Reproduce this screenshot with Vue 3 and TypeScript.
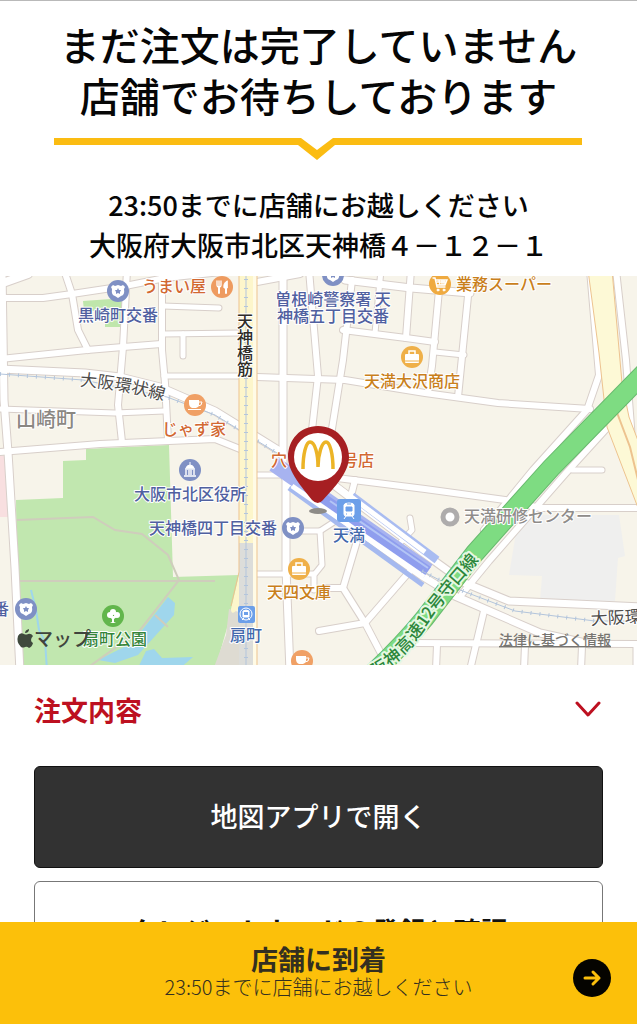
<script setup lang="ts">
import { ref } from 'vue'

interface Road { d: string; w: number }
interface Label { t: string; x: number; y: number; c: string }
interface Poi { kind: string; x: number; y: number; c: string }

const open = ref(false)

const roads: Road[] = [
  { d: 'M0 284L28 274', w: 8 },
  { d: 'M0 298L43 298L72 294L125 286L165 278L240 270', w: 6 },
  { d: 'M64 270L72 294L78 330L88 350', w: 6 },
  { d: 'M127 270L123 347L118 405L122 442', w: 6 },
  { d: 'M162 270V350L165 383L168 440', w: 6 },
  { d: 'M0 359L87 350L123 347L161 344', w: 6 },
  { d: 'M0 369L85 373L120 377L160 387L215 411L283 453', w: 7 },
  { d: 'M2 270L4 400L8 452L15 568L20 672', w: 7 },
  { d: 'M0 409L115 413L164 411', w: 5 },
  { d: 'M0 452L100 444L215 439L240 449', w: 6 },
  { d: 'M163 306L219 308', w: 5 },
  { d: 'M162 334L240 333', w: 5 },
  { d: 'M183 334V356', w: 5 },
  { d: 'M164 376H240', w: 5 },
  { d: 'M283 270V470L286 480V568L290 672', w: 7 },
  { d: 'M309 270L318 376L312 430', w: 6 },
  { d: 'M352 280L343 360L331 435', w: 6 },
  { d: 'M257 377L345 380L425 393L498 403L590 409', w: 6 },
  { d: 'M257 282L300 274', w: 6 },
  { d: 'M345 280L411 288L470 293', w: 7 },
  { d: 'M343 330L406 338L435 342', w: 6 },
  { d: 'M411 270L406 338', w: 6 },
  { d: 'M381 270L375 333', w: 5 },
  { d: 'M439 290L432 366L428 392', w: 6 },
  { d: 'M469 286L458 397', w: 6 },
  { d: 'M435 352L464 355', w: 5 },
  { d: 'M590 270L599 375L587 410L533 470L484 530', w: 6 },
  { d: 'M616 270L626 360L632 440', w: 6 },
  { d: 'M617 417L566 473L489 561L462 594', w: 6 },
  { d: 'M572 470H602', w: 5 },
  { d: 'M337 478L425 489L505 500L540 508H640', w: 6 },
  { d: 'M355 480L350 500', w: 6 },
  { d: 'M337 520L320 531H300', w: 5 },
  { d: 'M320 531L322 565L314 575V590', w: 5 },
  { d: 'M257 574H314', w: 5 },
  { d: 'M257 475H286', w: 5 },
  { d: 'M325 588H343L357 541', w: 6 },
  { d: 'M343 588L365 623L387 665', w: 6 },
  { d: 'M319 631L365 623L410 571', w: 6 },
  { d: 'M410 518L412 530L400 543', w: 5 },
  { d: 'M318 473L422 552L465 583L509 601L640 607', w: 7 },
  { d: 'M290 483L422 576L455 596L540 633L590 644', w: 7 },
  { d: 'M410 643L640 644', w: 6 },
  { d: 'M484 611L470 670', w: 6 },
  { d: 'M437 645L436 670', w: 6 },
  { d: 'M525 645L524 670', w: 6 },
  { d: 'M582 646L581 670', w: 6 },
  { d: 'M636 645V670', w: 5 },
]

const blue = '#5060a0'
const orange = '#d26832'
const gold = '#c97f1c'
const station = '#4168ac'

const labels: Label[] = [
  { t: '黒崎町交番', x: 118, y: 321, c: blue },
  { t: 'うまい屋', x: 174, y: 292, c: orange },
  { t: 'じゃず家', x: 194, y: 435, c: orange },
  { t: '曽根崎警察署 天', x: 333, y: 305, c: blue },
  { t: '神橋五丁目交番', x: 333, y: 322, c: blue },
  { t: '天満大沢商店', x: 412, y: 387, c: gold },
  { t: '業務スーパー', x: 504, y: 290, c: gold },
  { t: '穴', x: 279, y: 466, c: orange },
  { t: '号店', x: 358, y: 466, c: orange },
  { t: '大阪市北区役所', x: 190, y: 500, c: blue },
  { t: '天神橋四丁目交番', x: 213, y: 534, c: blue },
  { t: '番', x: 1, y: 615, c: blue },
  { t: '扇町公園', x: 115, y: 645, c: '#35853b' },
  { t: '扇町', x: 246, y: 641, c: station },
  { t: '天満', x: 349, y: 541, c: station },
  { t: '天四文庫', x: 299, y: 598, c: gold },
  { t: '天満研修センター', x: 528, y: 522, c: '#8f8c8a' },
]

const pois: Poi[] = [
  { kind: 'badge', x: 118, y: 291, c: '#7f90c4' },
  { kind: 'badge', x: 333, y: 275, c: '#7f90c4' },
  { kind: 'badge', x: 293, y: 528, c: '#7f90c4' },
  { kind: 'badge', x: 26, y: 609, c: '#7f90c4' },
  { kind: 'fork', x: 222, y: 287, c: '#ee9b60' },
  { kind: 'cup', x: 195, y: 405, c: '#f0a065' },
  { kind: 'cup', x: 302, y: 661, c: '#f0a065' },
  { kind: 'cart', x: 440, y: 284, c: '#efaa40' },
  { kind: 'bag', x: 412, y: 357, c: '#efb049' },
  { kind: 'bag', x: 299, y: 569, c: '#efb049' },
  { kind: 'hall', x: 190, y: 470, c: '#7f90c4' },
  { kind: 'tree', x: 113, y: 616, c: '#62b64c' },
]
</script>

<template>
  <main class="page">
    <header class="intro">
      <h1>まだ注文は完了していません<br>店舗でお待ちしております</h1>
      <div class="divider" aria-hidden="true">
        <span></span>
        <svg width="40" height="22" viewBox="0 0 40 22"><path d="M0 0H3L19 12L35 0H40V7H37L19 22L0 7Z" fill="#fbbc12" /></svg>
        <span></span>
      </div>
      <p>23:50までに店舗にお越しください<br>大阪府大阪市北区天神橋４－１２－１</p>
    </header>

    <svg class="map" viewBox="0 276 637 389" role="img" aria-label="店舗周辺の地図">
      <rect y="270" width="637" height="400" fill="#f7f4ea" />
      <path d="M0 456H7L11 517H0Z" fill="#f8dfe0" />
      <path d="M83 301L125 298L122 327H105V311H84Z" fill="#bfe6ab" />
      <path d="M86 449L169 445L173 577L239 575L235 600L215 670H18L16 500L63 498V461L86 460Z" fill="#c1e7af" />
      <path d="M229 609L239 612V670H213L226 635Z" fill="#dedbd2" />
      <path d="M519 515H619L625 556L618 558L615 601H540L542 576L509 575Z" fill="#efefee" />
      <g fill="#9fd6ec">
        <path d="M168 597L175 603L174 615L138 655L115 663L98 660L132 643Z" />
        <path d="M146 651L154 649L162 658L193 657L178 670H137Z" />
      </g>
      <path d="M31 590L36 610L39 630L45 641L47 670" fill="none" stroke="#9fd6ec" stroke-width="2" />
      <path d="M17 520L93 517L115 530L142 534L168 555L179 580L140 630L90 666M17 581H215M155 615L168 627" class="trail" />

      <g class="casing"><path v-for="(r, i) in roads" :key="i" :d="r.d" :stroke-width="r.w + 2" /></g>
      <g class="surface"><path v-for="(r, i) in roads" :key="i" :d="r.d" :stroke-width="r.w" /></g>

      <g fill="none">
        <path d="M289 488L423 585" stroke="#a5b9ef" stroke-width="5" />
        <path d="M352 496L437 560" stroke="#a9bcf1" stroke-width="8" />
        <path d="M274 464L428 571" stroke="#a7b3f0" stroke-width="16" />
        <path d="M310 489L428 571" stroke="#8f9eee" stroke-width="10" />
        <path d="M330 501L428 568" stroke="#b3c5f5" stroke-width="2" />
        <path d="M334 484L425 552" stroke="#fff" stroke-width="5" />
        <path d="M292 486L424 577" stroke="#fff" stroke-width="5" />
        <g class="rail">
          <path d="M0 374L83 380L167 397L215 415L277 453M422 571L455 588L515 611L595 621H637" />
          <path class="ties" d="M0 374L83 380L167 397L215 415L277 453M422 571L455 588L515 611L595 621H637" />
        </g>
      </g>

      <path d="M239 270H257V670H239Z" fill="#fff" />
      <path d="M239 270H253V543H239Z" fill="#fdf6cb" />
      <path d="M253 270H257V670H253Z" fill="#fffbe6" />
      <path d="M239 543H253V670H239Z" fill="#dcddda" />
      <path d="M239 543V608Q231 617 231 609L239 575" fill="#fdf6cb" />
      <path d="M239 270V572L231 606M257 270V670" fill="none" stroke="#edc38f" />
      <g class="rail">
        <path d="M246 270V670" /><path class="ties" d="M246 270V670" />
      </g>

      <path d="M588 270L599 353L607 427L640 513V446L629 417L622 383L612 270Z" fill="#fdf9d6" stroke="#edc38f" />
      <path d="M616 410L630 447L640 488" fill="none" stroke="#edc38f" stroke-width="2" />
      <path class="hw-edge" d="M650 367L551 468L475 553L424 619Q402 646 370 676" />
      <path class="hw" d="M650 367L551 468L475 553L424 619Q402 646 370 676" />

      <g class="labels">
        <text v-for="l in labels" :key="l.t" :x="l.x" :y="l.y" :fill="l.c">{{ l.t }}</text>
      </g>
      <path id="loop-west" d="M80 386Q120 388 168 402" fill="none" />
      <path id="highway" d="M340 691L362 676L378 666L392 655L406 641L416 627L429 608L441 593L453 578L473 555" fill="none" />
      <text class="line-name"><textPath href="#loop-west">大阪環状線</textPath></text>
      <text class="line-name" x="591" y="625" transform="rotate(-3 591 625)">大阪環状線</text>
      <text class="highway-name"><textPath href="#highway" startOffset="100%">阪神高速12号守口線</textPath></text>
      <text class="street" x="245" y="313">天神橋筋</text>
      <text class="district" x="16" y="427">山崎町</text>

      <circle cx="450" cy="517" r="7" fill="#fff" stroke="#aeacac" stroke-width="5" />
      <g v-for="(p, i) in pois" :key="i" :transform="`translate(${p.x} ${p.y})`">
        <circle r="11" :fill="p.c" />
        <g v-if="p.kind === 'badge'">
          <path d="M-5 -6L-3 -5L0 -6L3 -5L5 -6L7 -4L6 -2Q7 4 3 5L0 7L-3 5Q-7 4 -6 -2L-7 -4Z" fill="#fff" />
          <path d="M0 -3L1 -1H3L2 1L2 3L0 2L-2 3L-2 1L-3 -1H-1Z" :fill="p.c" />
        </g>
        <g v-else-if="p.kind === 'fork'" fill="none" stroke="#fff" stroke-linecap="round">
          <path d="M-5 -6V-2Q-5 0 -3 0Q-1 0 -1 -2V-6M-3 -6V0" stroke-width="1.3" />
          <path d="M-3 0V6M4 0V6" stroke-width="2" />
          <path d="M5 -6Q1 -4 2 1H5Z" fill="#fff" />
        </g>
        <g v-else-if="p.kind === 'cup'">
          <path d="M-6 -5H4V0Q3 3 1 3H-3Q-6 2 -6 -2ZM-7 4H6V5H-7Z" fill="#fff" />
          <path d="M4 -3H7Q7 1 3 1" fill="none" stroke="#fff" />
        </g>
        <g v-else-if="p.kind === 'cart'" fill="none" stroke="#fff" stroke-linecap="round">
          <path d="M-7 -6H-5L-3 3H5M-4 -4H7L5 1H-3M-3 -2H6M-1 -4L0 1M2 -4V1M4 -4V1" stroke-width="1.4" />
          <circle cx="-2" cy="6" r="1" fill="#fff" /><circle cx="4" cy="6" r="1" fill="#fff" />
        </g>
        <g v-else-if="p.kind === 'bag'">
          <rect x="-7" y="-3" width="14" height="9" rx="1" fill="#fff" />
          <path d="M-3 -3V-6H3V-3" fill="none" stroke="#fff" stroke-width="1.5" />
          <path d="M-7 4H7" :stroke="p.c" />
        </g>
        <g v-else-if="p.kind === 'hall'" fill="none" stroke="#fff">
          <path d="M-4 -2Q-3 -5 0 -5Q3 -5 4 -2ZM0 -8V-5" fill="#fff" />
          <path d="M-5 -1H5M-4 0V5M-1 0V5M1 0V5M4 0V5M-6 6H6" stroke-width="1.4" />
        </g>
        <g v-else fill="#fff">
          <circle cx="-3" cy="-1" r="3" /><circle cx="0" cy="-4" r="3" /><circle cx="4" cy="-1" r="3" />
          <path d="M-5 0H5L1 3V6L3 7H-3L-1 6V3Z" />
        </g>
      </g>

      <rect x="337" y="499" width="24" height="23" rx="3" fill="#6c9fe9" />
      <rect x="238" y="606" width="17" height="17" rx="2" fill="#6c9fe9" />
      <g fill="#fff" stroke="#fff">
        <path d="M344 505Q344 503 349 503Q354 503 354 505V514Q354 516 352 516H346Q344 516 344 514ZM346 516L344 519M352 516L354 519" />
        <path d="M347 504H351M346 507H352V511H346ZM346 514H347M351 514H352" fill="#6c9fe9" stroke="#6c9fe9" />
        <circle cx="246" cy="614" r="6" fill="none" />
        <path d="M243 611Q246 609 249 611V617H243ZM244 618L242 620M248 618L250 620" />
        <path d="M244 612H248V615H244Z" fill="#6c9fe9" stroke="none" />
      </g>

      <ellipse cx="318" cy="511" rx="9" ry="3" fill="#8d8b87" />
      <path d="M318 426C300 426 288 440 288 457C288 472 302 487 312 500Q318 506 323 500C335 487 349 472 349 457C349 440 336 426 318 426Z" fill="#a61f22" />
      <circle cx="318" cy="457" r="24" fill="#fff" />
      <path d="M303 469C303 454 306 442 310 442C315 442 318 454 318 467C318 454 322 442 326 442C330 442 333 454 333 469" fill="none" stroke="#ecb426" stroke-width="3.5" />

      <g transform="translate(17 629)" fill="#3f493d">
        <path d="M14 11Q14 9 16 7Q14 4 11 5Q9 6 7 5Q3 3 1 7Q-1 13 4 18Q6 19 8 18Q10 17 12 19Q15 18 16 14Q14 13 14 11Z" />
        <path d="M8 4Q8 1 12 0Q12 4 8 4Z" />
      </g>
      <text class="brand" x="34" y="646">マップ</text>
      <a href="#legal"><text class="legal" x="499" y="645">法律に基づく情報</text></a>
    </svg>

    <section class="actions">
      <button class="order" type="button" :aria-expanded="open" @click="open = !open">
        <span>注文内容</span>
        <svg width="28" height="18" viewBox="0 0 28 18"><path d="M2 3L13 15L24 3" fill="none" stroke="#bd1020" stroke-width="3" stroke-linecap="round" stroke-linejoin="round" /></svg>
      </button>
      <button class="action dark" type="button">地図アプリで開く</button>
      <button class="action" type="button">クレジットカードの登録と確認</button>
    </section>

    <button class="arrive" type="button">
      <span class="arrive-text"><strong>店舗に到着</strong><small>23:50までに店舗にお越しください</small></span>
      <svg class="arrow" width="38" height="38" viewBox="0 0 38 38">
        <circle cx="19" cy="19" r="19" fill="#050400" />
        <path d="M12 19H26M20 13L26 19L20 25" fill="none" stroke="#fbbf0c" stroke-width="3" stroke-linecap="round" stroke-linejoin="round" />
      </svg>
    </button>
  </main>
</template>

<style>
html, body { background: #fff; }
body { margin: 0; }
</style>

<style scoped>
.page {
  height: 100vh;
  overflow: hidden;
  box-sizing: border-box;
  border-top: 1px solid #b9b9b9;
  background: #fff;
  color: #060606;
  font-family: "Noto Sans CJK JP", "Noto Sans", sans-serif;
}
button { font-family: inherit; cursor: pointer; }
.intro { padding: 18px 0 11px; text-align: center; }
h1 { margin: 0; font-size: 40px; line-height: 51px; font-weight: 500; white-space: nowrap; }
.divider { display: flex; margin: 17px 55px 25px 54px; }
.divider span { flex: 1; height: 7px; background: #fbbc12; }
.divider svg { display: block; }
.intro p { margin: 0; font-size: 27px; line-height: 40px; font-weight: 500; white-space: nowrap; }

.map { display: block; width: 100%; height: auto; }
.trail { fill: none; stroke: #cfcdbc; stroke-width: 2; }
.casing { fill: none; stroke: #d8cfca; stroke-linecap: round; stroke-linejoin: round; }
.surface { fill: none; stroke: #fff; stroke-linecap: round; stroke-linejoin: round; }
.rail { fill: none; stroke: #b3c5dc; stroke-width: 1; }
.rail .ties { stroke-width: 4; stroke-dasharray: 1 8; }
.hw { fill: none; stroke: #7edc82; stroke-width: 18; }
.hw-edge { fill: none; stroke: #68b96f; stroke-width: 20; }
.map text { paint-order: stroke; stroke: #fff; stroke-width: 2px; stroke-linejoin: round; font-size: 16px; }
.labels text { text-anchor: middle; font-weight: 500; }
.map .line-name { font-size: 17px; fill: #4d4b4a; }
.map .highway-name { font-size: 17px; font-weight: 500; fill: #2c873b; stroke: #e6f8e2; stroke-width: 4px; text-anchor: end; dominant-baseline: central; }
.map .street { fill: #2e2c28; font-weight: 500; writing-mode: vertical-rl; }
.map .district { font-size: 20px; font-weight: 500; fill: #8b8782; }
.map .brand { font-size: 19px; font-weight: 500; fill: #3f443d; stroke: none; }
.map .legal { font-size: 14px; font-weight: 500; fill: #777571; stroke: none; text-decoration: underline; }

.actions { padding: 0 34px; }
.order {
  display: flex;
  align-items: center;
  justify-content: space-between;
  width: 100%;
  height: 88px;
  margin-bottom: 13px;
  padding: 0;
  border: 0;
  background: none;
  color: #bd1020;
  font-size: 27px;
  font-weight: 700;
}
.action {
  display: block;
  width: 100%;
  height: 102px;
  margin-bottom: 13px;
  padding: 0 0 4px;
  border: 1px solid #777;
  border-radius: 6px;
  background: #fff;
  color: #111;
  font-size: 27px;
  font-weight: 700;
}
.action.dark { border-color: #111; background: #323232; color: #fff; font-weight: 500; }

.arrive {
  position: fixed;
  right: 0;
  bottom: 0;
  left: 0;
  display: grid;
  grid-template-columns: 38px 1fr 38px;
  align-items: center;
  height: 102px;
  padding: 0 26px;
  border: 0;
  background: #fcc00a;
  color: #332f20;
}
.arrive-text { grid-column: 2; display: flex; flex-direction: column; align-items: center; }
.arrive strong { font-size: 27px; line-height: 28px; font-weight: 700; }
.arrive small { font-size: 20px; line-height: 28px; font-weight: 300; }
.arrow { margin-top: 10px; }
</style>
